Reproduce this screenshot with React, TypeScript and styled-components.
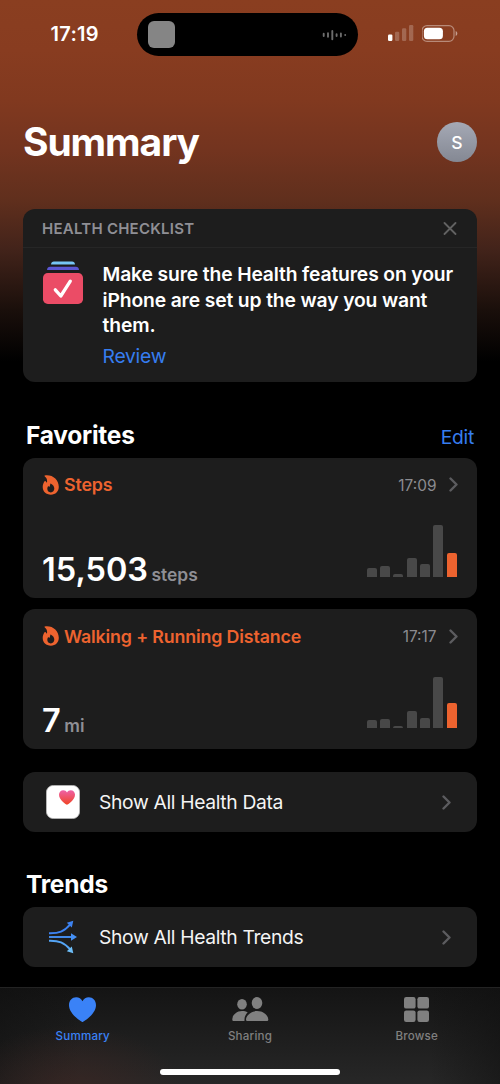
import React from "react";
import styled, { createGlobalStyle } from "styled-components";

const GlobalStyle = createGlobalStyle`
  *, *::before, *::after { box-sizing: border-box; }
  html, body { margin: 0; padding: 0; background: #000; }
  body { font-family: Inter, "Liberation Sans", sans-serif; -webkit-font-smoothing: antialiased; }
  h1, h2, h3, p { margin: 0; }
  button { border: 0; padding: 0; background: none; font: inherit; color: inherit; }
  svg { display: block; flex: none; }
`;

const Screen = styled.div`
  display: flex;
  flex-direction: column;
  width: 500px;
  height: 1084px;
  overflow: hidden;
  color: #fff;
  background: linear-gradient(
    180deg,
    #8a3e20 0,
    #883c20 50px,
    #81391f 100px,
    #73341f 150px,
    #602f1d 200px,
    #42231a 250px,
    #1a0f0b 310px,
    #000 362px
  );
`;

const StatusBar = styled.header`
  display: grid;
  grid-template-columns: 137px 221px 1fr;
  height: 69px;
  padding-top: 13px;
`;

const Clock = styled.div`
  padding-left: 50.5px;
  font-size: 20px;
  font-weight: 600;
  line-height: 43px;
  letter-spacing: 0.3px;
`;

const Island = styled.div`
  display: flex;
  align-items: center;
  justify-content: space-between;
  height: 43px;
  padding: 0 11px;
  border-radius: 22px;
  background: #000;
`;

const Artwork = styled.div`
  width: 27px;
  height: 27px;
  border-radius: 6px;
  background: #858585;
`;

const StatusIcons = styled.div`
  display: flex;
  align-items: center;
  gap: 8px;
  height: 41px;
  padding-left: 30px;
`;

const Content = styled.main`
  display: flex;
  flex-direction: column;
  height: 918px;
  padding: 0 23px;
`;

const TitleRow = styled.div`
  display: flex;
  align-items: center;
  justify-content: space-between;
  height: 140px;
`;

const PageTitle = styled.h1`
  padding-top: 6px;
  font-size: 39px;
  font-weight: 700;
  line-height: 46px;
  letter-spacing: -1.1px;
`;

const Avatar = styled.div`
  display: flex;
  align-items: center;
  justify-content: center;
  width: 40px;
  height: 40px;
  margin-top: 5px;
  padding-top: 1px;
  border-radius: 50%;
  background: linear-gradient(#a5a9b5, #848893);
  font-size: 17.5px;
  font-weight: 500;
`;

const Card = styled.section`
  flex: none;
  border-radius: 12px;
  background: #1d1d1d;
`;

const ChecklistCard = styled(Card)`
  height: 172.5px;
`;

const ChecklistHeader = styled.div`
  display: flex;
  align-items: center;
  justify-content: space-between;
  height: 39px;
  padding: 0 20px 0 19px;
  border-bottom: 1px solid #262626;
`;

const ChecklistLabel = styled.h3`
  color: #8f8f95;
  font-size: 15px;
  font-weight: 600;
  letter-spacing: 0.25px;
`;

const ChecklistBody = styled.div`
  display: flex;
  gap: 19.5px;
  padding: 13px 20px 0 20px;
`;

const ChecklistMessage = styled.p`
  padding-top: 1px;
  font-size: 19.3px;
  font-weight: 600;
  line-height: 25.7px;
  letter-spacing: -0.13px;
  white-space: nowrap;
`;

const TextLink = styled.button<{ $top?: number }>`
  margin-top: ${({ $top = 0 }) => $top}px;
  color: #367df0;
  font-size: 19.3px;
  line-height: 26px;
  letter-spacing: -0.25px;
`;

const SectionHeader = styled.div<{ $height: number }>`
  display: flex;
  align-items: flex-end;
  justify-content: space-between;
  flex: none;
  height: ${({ $height }) => $height}px;
  padding: 0 3px 8px 3px;
`;

const SectionTitle = styled.h2`
  font-size: 24.5px;
  font-weight: 700;
  line-height: 30px;
  letter-spacing: -0.25px;
`;

const MetricCard = styled(Card)`
  display: flex;
  flex-direction: column;
  justify-content: space-between;
  height: 140px;
  padding: 14.5px 19px 10px 19px;

  & + & { margin-top: 11.5px; }
`;

const MetricTop = styled.div`
  display: flex;
  align-items: center;
  height: 25px;
`;

const MetricName = styled.h3`
  flex: 1;
  padding-left: 5px;
  color: #ed632f;
  font-size: 17.8px;
  font-weight: 600;
  letter-spacing: -0.14px;
  white-space: nowrap;
`;

const MetricTime = styled.span`
  padding: 1px 12.5px 0 0;
  color: #8b8b90;
  font-size: 15.4px;
`;

const MetricBottom = styled.div`
  display: flex;
  align-items: flex-end;
  justify-content: space-between;
`;

const Reading = styled.div`
  display: flex;
  align-items: baseline;
  gap: 3.5px;
  height: 38px;
  line-height: 39px;
`;

const ReadingValue = styled.span`
  font-size: 32.5px;
  font-weight: 600;
  letter-spacing: 0;
`;

const ReadingUnit = styled.span`
  color: #8f8f95;
  font-size: 17.4px;
  font-weight: 600;
`;

const Chart = styled.div`
  display: flex;
  align-items: flex-end;
  gap: 3.4px;
  height: 52px;
  margin-bottom: 11px;
  padding-right: 1.5px;
`;

const Bar = styled.div<{ $active: boolean }>`
  width: 9.9px;
  border-radius: 2px 2px 0 0;
  background: ${({ $active }) => ($active ? "#ed632f" : "#484848")};
`;

const LinkCard = styled(Card)`
  display: flex;
  align-items: center;
  height: 59.5px;
  padding: 1px 26.5px 0 23px;
`;

const LinkIcon = styled.div`
  display: flex;
  align-items: center;
  justify-content: center;
  width: 34px;
  height: 34px;
`;

const LinkLabel = styled.span`
  flex: 1;
  padding-left: 19px;
  color: #f4f4f4;
  font-size: 19.3px;
  letter-spacing: -0.34px;
`;

const Spacer = styled.div`
  flex: none;
  height: 23px;
`;

const TabBar = styled.nav`
  display: flex;
  flex-direction: column;
  align-items: center;
  height: 97px;
  border-top: 1px solid #232323;
  background:
    radial-gradient(ellipse 150px 90px at 72px 105px, rgba(62, 38, 34, 0.7), rgba(62, 38, 34, 0) 75%),
    linear-gradient(90deg, rgba(15, 15, 15, 0.5), transparent 80px, transparent 430px, rgba(15, 15, 15, 0.5)),
    linear-gradient(#141414, #272727);
`;

const Tabs = styled.div`
  display: grid;
  grid-template-columns: 165.5px 169px 164.5px;
  width: 100%;
  height: 81px;
`;

const Tab = styled.button<{ $active?: boolean }>`
  display: flex;
  flex-direction: column;
  align-items: center;
  padding-top: 7px;
  color: ${({ $active }) => ($active ? "#3a82f7" : "#808080")};
`;

const TabIcon = styled.span`
  display: flex;
  align-items: center;
  justify-content: center;
  height: 28px;
`;

const TabLabel = styled.span`
  padding-top: 5px;
  font-size: 11.6px;
  font-weight: 500;
  line-height: 17px;
  letter-spacing: 0.2px;
`;

const HomeIndicator = styled.div`
  width: 180px;
  height: 6px;
  border-radius: 3px;
  background: #fff;
`;

const HEART = "M13.5 25C12.6 25 0 17 0 8.2 0 3.5 3.2 0.3 7.2 0.3c2.800 0 5 1.500 6.300 3.900C14.800 1.800 17 .3 19.800.3 23.800.3 27 3.500 27 8.200 27 17 14.400 25 13.500 25z";

const Waveform = () => (
  <svg width="25" height="12" viewBox="0 0 25 12" stroke="#6c6c6c" strokeWidth="1.9" strokeLinecap="round">
    <path d="M1.700 4.800v2.200M6 4.300v3.400M10.300 2v8.200M14.600 5.200v1.800M18.900 4.400v3.200M23.200 6v.1" />
  </svg>
);

const Signal = () => (
  <svg width="26" height="17" viewBox="0 0 26 17" fill="#fff">
    <rect x="0" y="9.5" width="4.4" height="6.5" rx="1.2" />
    <g opacity="0.22">
      <rect x="7" y="6.7" width="4.3" height="9.3" rx="1.2" />
      <rect x="14" y="3.3" width="4.3" height="12.7" rx="1.2" />
      <rect x="21" y="0" width="4.3" height="16" rx="1.2" />
    </g>
  </svg>
);

const Battery = () => (
  <svg width="37" height="17" viewBox="0.6 0 37 17">
    <rect x="0.6" y="0.6" width="32" height="15.7" rx="5" fill="none" stroke="#fff" strokeOpacity="0.4" strokeWidth="1.2" />
    <rect x="2.5" y="2.7" width="19" height="11.5" rx="3.5" fill="#fff" />
    <path d="M34.300 6v5c1-.4 1.600-1.400 1.600-2.500S35.300 6.400 34.300 6z" fill="#fff" fillOpacity="0.5" />
  </svg>
);

const Close = () => (
  <svg width="14" height="14" viewBox="0 0 14 14" stroke="#626262" strokeWidth="1.8" strokeLinecap="round">
    <path d="M1.500 2l11 11M12.500 2l-11 11" />
  </svg>
);

const ChecklistIcon = () => (
  <svg width="40" height="43" viewBox="0 0 40 43">
    <path d="M8 3.500C8.100 1.700 9.200.6 11 .6h18c1.800 0 2.900 1.100 3 2.900z" fill="#76c6f5" />
    <path d="M4 8.900c.2-1.900 1.300-3.100 3.100-3.100h25.800c1.800 0 2.900 1.200 3.100 3.100z" fill="#5b57d2" />
    <rect x="0" y="12" width="40" height="31" rx="4.8" fill="#eb4c66" />
    <path d="M12.300 28.800l5.500 6.200 9.500-14.800" fill="none" stroke="#fff" strokeWidth="3.3" strokeLinecap="round" strokeLinejoin="round" />
  </svg>
);

const Flame = () => (
  <svg width="17" height="20" viewBox="0 0 17 20">
    <path
      fillRule="evenodd"
      fill="#ed632f"
      transform="translate(0.5 0)"
      d="M2.300.4C9.800-.8 16.300 4.400 16.300 11.800c0 4.700-3.300 7.900-7.900 7.900-4.800 0-8.200-3.100-8.200-7.600 0-2.500 1-4.600 1.900-5.800.3-.4.900-.3 1.200.1l1.100 1.300C4.900 5.300 4.500 2.900 2.300 1.500 1.800 1.100 1.800.5 2.300.4zM7.800 9.100c-.1 1.200-.4 2-.9 2.800l-.8-.6c-.3-.2-.6-.1-.7.2-.3.6-.6 1.400-.6 2.300 0 2.200 1.500 3.600 3.500 3.600s3.500-1.500 3.500-3.800c0-2.100-1.200-3.800-3.300-4.900-.4-.2-.7 0-.7.4z"
    />
  </svg>
);

const Chevron = () => (
  <svg width="9" height="15" viewBox="0 0 9 15" fill="none" stroke="#5c5c5f" strokeWidth="2.4" strokeLinecap="round" strokeLinejoin="round">
    <path d="M1.500 1.500l6 6-6 6" />
  </svg>
);

const HealthAppIcon = () => (
  <svg width="34" height="34" viewBox="0 0 34 34">
    <defs>
      <linearGradient id="heart" x1="0" y1="0" x2="0" y2="1">
        <stop offset="0" stopColor="#ee61a8" />
        <stop offset="1" stopColor="#f04423" />
      </linearGradient>
    </defs>
    <rect x="0.4" y="0.4" width="33.2" height="33.2" rx="7" fill="#fff" stroke="#bdbdbd" strokeWidth="0.8" />
    <path transform="translate(13 5) scale(.593 .593)" fill="url(#heart)" d={HEART} />
  </svg>
);

const TrendsIcon = () => (
  <svg width="28" height="34" viewBox="0 0 28 34" fill="none" strokeWidth="1.9">
    <path d="M0 13.200c10 .2 15-1.400 21.500-9" stroke="#3d83f2" />
    <path d="M0 17h23" stroke="#4590f4" />
    <path d="M0 20.800c10-.2 15 1.400 21.500 9" stroke="#55a5f5" />
    <path d="M24.300.7l-6.500 2.100 5 4.600z" fill="#3d83f2" />
    <path d="M28 17l-6-3.700v7.400z" fill="#4590f4" />
    <path d="M24.300 33.300l-6.500-2.100 5-4.600z" fill="#6dbdf7" />
  </svg>
);

const SummaryIcon = () => (
  <svg width="27" height="25" viewBox="0 0 27 25" fill="currentColor">
    <path d={HEART} />
  </svg>
);

const SharingIcon = () => (
  <svg width="37" height="25" viewBox="0 0 37 25" fill="currentColor">
    <ellipse cx="10" cy="7.2" rx="4.8" ry="5.2" />
    <ellipse cx="25" cy="6" rx="5.3" ry="5.9" />
    <path d="M15.700 15.400C13.500 17.300 12.200 20 12.500 24H1.800C.8 24 .3 23.400.3 22.400.3 18.500 4.300 14.100 10 14.100c2.200 0 4.100.5 5.700 1.300z" />
    <path d="M25 14.100c6.700 0 11.300 4.700 11.300 8.400 0 1-.6 1.500-1.600 1.500H15.600c-1 0-1.600-.5-1.600-1.500 0-3.700 4.500-8.400 11-8.400z" />
  </svg>
);

const BrowseIcon = () => (
  <svg width="25" height="25" viewBox="0 0 25 25" fill="currentColor">
    <rect x="0" y="0" width="11.6" height="11.6" rx="2.2" />
    <rect x="13.4" y="0" width="11.6" height="11.6" rx="2.2" />
    <rect x="0" y="13.4" width="11.6" height="11.6" rx="2.2" />
    <rect x="13.4" y="13.4" width="11.6" height="11.6" rx="2.2" />
  </svg>
);

interface MetricProps {
  name: string;
  time: string;
  value: string;
  unit: string;
  bars: number[];
}

const Metric = ({ name, time, value, unit, bars }: MetricProps) => (
  <MetricCard>
    <MetricTop>
      <Flame />
      <MetricName>{name}</MetricName>
      <MetricTime>{time}</MetricTime>
      <Chevron />
    </MetricTop>
    <MetricBottom>
      <Reading>
        <ReadingValue>{value}</ReadingValue>
        <ReadingUnit>{unit}</ReadingUnit>
      </Reading>
      <Chart>
        {bars.map((height, i) => (
          <Bar key={i} $active={i === bars.length - 1} style={{ height }} />
        ))}
      </Chart>
    </MetricBottom>
  </MetricCard>
);

export default function App() {
  return (
    <>
      <GlobalStyle />
      <Screen>
        <StatusBar>
          <Clock>17:19</Clock>
          <Island>
            <Artwork />
            <Waveform />
          </Island>
          <StatusIcons>
            <Signal />
            <Battery />
          </StatusIcons>
        </StatusBar>

        <Content>
          <TitleRow>
            <PageTitle>Summary</PageTitle>
            <Avatar>S</Avatar>
          </TitleRow>

          <ChecklistCard>
            <ChecklistHeader>
              <ChecklistLabel>HEALTH CHECKLIST</ChecklistLabel>
              <Close />
            </ChecklistHeader>
            <ChecklistBody>
              <ChecklistIcon />
              <div>
                <ChecklistMessage>
                  Make sure the Health features on your
                  <br />
                  iPhone are set up the way you want
                  <br />
                  them.
                </ChecklistMessage>
                <TextLink $top={4}>Review</TextLink>
              </div>
            </ChecklistBody>
          </ChecklistCard>

          <SectionHeader $height={76}>
            <SectionTitle>Favorites</SectionTitle>
            <TextLink>Edit</TextLink>
          </SectionHeader>
          <Metric name="Steps" time="17:09" value="15,503" unit="steps" bars={[9, 11, 3, 19, 12.5, 51.5, 24]} />
          <Metric name="Walking + Running Distance" time="17:17" value="7" unit="mi" bars={[8, 9, 2.5, 17, 10, 51.5, 25]} />
          <Spacer />
          <LinkCard>
            <LinkIcon>
              <HealthAppIcon />
            </LinkIcon>
            <LinkLabel>Show All Health Data</LinkLabel>
            <Chevron />
          </LinkCard>

          <SectionHeader $height={75.5}>
            <SectionTitle>Trends</SectionTitle>
          </SectionHeader>
          <LinkCard>
            <LinkIcon>
              <TrendsIcon />
            </LinkIcon>
            <LinkLabel>Show All Health Trends</LinkLabel>
            <Chevron />
          </LinkCard>
        </Content>

        <TabBar>
          <Tabs>
            <Tab $active>
              <TabIcon><SummaryIcon /></TabIcon>
              <TabLabel>Summary</TabLabel>
            </Tab>
            <Tab>
              <TabIcon><SharingIcon /></TabIcon>
              <TabLabel>Sharing</TabLabel>
            </Tab>
            <Tab>
              <TabIcon><BrowseIcon /></TabIcon>
              <TabLabel>Browse</TabLabel>
            </Tab>
          </Tabs>
          <HomeIndicator />
        </TabBar>
      </Screen>
    </>
  );
}
